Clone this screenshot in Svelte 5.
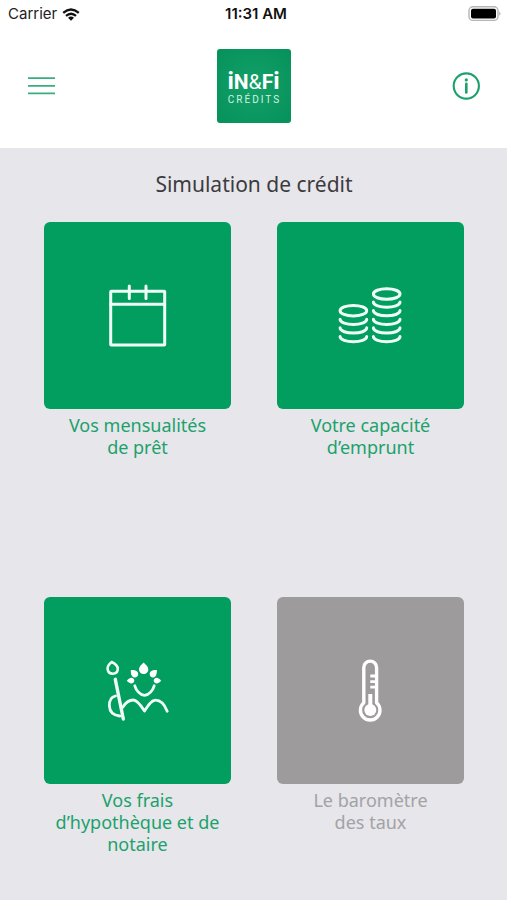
<script>
  const tiles = [
    { id: 'calendar', lines: ['Vos mensualités', 'de prêt'] },
    { id: 'coins', lines: ['Votre capacité', 'd’emprunt'] },
    { id: 'notary', lines: ['Vos frais', 'd’hypothèque et de', 'notaire'] },
    { id: 'thermometer', lines: ['Le baromètre', 'des taux'], disabled: true }
  ];
  const boxes = {
    calendar: '-46 -48 187 187',
    coins: '-48 -48 187 187',
    notary: '-51 -53 187 187',
    thermometer: '-63 -53 187 187'
  };
  const leftCoins = [50, 58.6, 67.2];
  const rightCoins = [32.8, 41.4, 50, 58.6, 67.2];
</script>

<div class="screen">
  <div class="status">
    <div class="carrier">
      <span>Carrier</span>
      <svg width="18" height="13" viewBox="0 0 18 13" aria-hidden="true">
        <g fill="none" stroke="#111" stroke-width="2.3">
          <path d="M1.2 4.9 Q9 -1.9 16.8 4.9" />
          <path d="M4 7.9 Q9 3.5 14 7.9" />
        </g>
        <path d="M6 9.8 Q9 7.4 12 9.8 L9 12.8 Z" fill="#111" />
      </svg>
    </div>
    <time>11:31 AM</time>
    <svg class="battery" width="36" height="16" viewBox="0 0 36 16" aria-hidden="true">
      <rect x="1" y="0.8" width="29" height="13.6" rx="4" fill="#fff" stroke="#b5b5b5" stroke-width="1.4" />
      <rect x="3" y="2.8" width="25" height="9.6" rx="2" fill="#000" />
      <path d="M31.4 5.4 Q33.4 7.6 31.4 9.8 Z" fill="#999" />
    </svg>
  </div>

  <header>
    <button class="icon" aria-label="Menu">
      <svg width="28" height="28" viewBox="0 0 28 28" stroke="#3aad80" stroke-width="1.8">
        <path d="M1 6.2H28M1 13.8H28M1 21.4H28" />
      </svg>
    </button>
    <div class="logo">
      <div class="brand"><span>i</span>N<span class="amp">&amp;</span>F<span>i</span></div>
      <div class="sub">CRÉDITS</div>
    </div>
    <button class="icon" aria-label="Informations">
      <svg width="28" height="28" viewBox="0 0 28 28" fill="none" stroke="#1ba26c">
        <circle cx="14.3" cy="14" r="12.6" stroke-width="2.1" />
        <path d="M14.3 11.8V20.4" stroke-width="2.6" stroke-linecap="round" />
        <circle cx="14.3" cy="7.9" r="1.6" fill="#1ba26c" stroke="none" />
      </svg>
    </button>
  </header>

  <main>
    <h1>Simulation de crédit</h1>
    <div class="grid">
      {#each tiles as tile (tile.id)}
        <button class="tile" disabled={tile.disabled}>
          <svg class="art" viewBox={boxes[tile.id]} fill="none" stroke="#effff7" stroke-width="3" stroke-linecap="round" stroke-linejoin="round" aria-hidden="true">
            {#if tile.id === 'calendar'}
              <rect x="20.7" y="21.3" width="54" height="53.7" rx="0.5" />
              <path d="M20.7 34.3H74.7M39.3 16V28.4M56 16V28.4" />
            {:else if tile.id === 'coins'}
              <ellipse cx="28.4" cy="40.7" rx="13.3" ry="5.3" />
              {#each leftCoins as y}
                <path d="M15.1 {y - 0.8} C15.1 {y + 6.2} 41.7 {y + 6.2} 41.7 {y - 0.8}" />
              {/each}
              <ellipse cx="61.7" cy="24" rx="13.3" ry="5.3" />
              {#each rightCoins as y}
                <path d="M48.4 {y - 0.8} C48.4 {y + 6.2} 75 {y + 6.2} 75 {y - 0.8}" />
              {/each}
            {:else if tile.id === 'notary'}
              <path d="M16.7 12 C13.6 14.4 12.3 16.8 12.6 19.3 C13 22 15 23.7 17.8 23.7 C20.6 23.7 22.6 21.8 22.8 19 C22.8 16 20.5 13.8 16.7 12 Z" stroke-width="2.6" />
              <path d="M20.3 29.3 L28.3 69" stroke-width="3.4" />
              <path d="M20.5 46 C16 47 14.2 51 14.4 56 C14.6 61.5 18.3 65.3 24.8 66" stroke-width="2.8" />
              <path d="M27.5 57.5 C31 51.8 35 50 38.2 50 C42.2 50 46 55.5 49.5 61 C53 55.5 56.3 50.4 60.3 50.2 C66 50 69.5 54.5 72.2 61.2" stroke-width="2.8" />
              <path d="M39.8 35.8 C41 40 45 45.2 49.5 45.4 C54 45.2 58 40 59.2 35.8" stroke-width="2.8" />
              <g fill="#fff" stroke="none">
                <path d="M48.6 12.6 C45.6 15.3 44 17.2 44 19.4 C44 22 46 23.9 48.6 23.9 C51.2 23.9 53.3 22 53.3 19.4 C53.3 17.2 51.6 15.3 48.6 12.6 Z" />
                <path d="M35.8 20 C39.8 19.7 43.2 21 43.2 24 C43.2 26.2 41.4 27.6 39.5 27.4 C36.7 27.2 35.8 24.3 35.8 20 Z" />
                <path d="M61.9 20 C57.8 19.7 54.7 21 54.7 24 C54.7 26.2 56.3 27.6 58.2 27.4 C61 27.2 61.9 24.3 61.9 20 Z" />
                <path d="M31.8 30.7 C34 28.2 35.4 27.6 36.6 27.8 C40.2 28.4 40.2 33 36.6 33.4 C35.2 33.5 33.8 32.8 31.8 30.7 Z" />
                <path d="M66.2 30.7 C64 28.2 62.6 27.6 61.4 27.8 C57.8 28.4 57.8 33 61.4 33.4 C62.8 33.5 64.2 32.8 66.2 30.7 Z" />
              </g>
            {:else}
              <path d="M23.8 52.8 V17.5 A6.4 6.4 0 0 1 36.6 17.5 V52.8 A9.8 9.8 0 1 1 23.8 52.8 Z" stroke="#fff" stroke-width="3.4" />
              <path d="M30.3 26H36M30.3 31.6H36M30.3 37.2H36" stroke="#fff" stroke-width="2.8" stroke-linecap="butt" />
              <path d="M30.3 44V58" stroke="#fff" stroke-width="4" stroke-linecap="butt" />
              <circle cx="30.3" cy="60" r="6" fill="#fff" stroke="none" />
            {/if}
          </svg>
          <span class="label">
            {#each tile.lines as line}<span>{line}</span>{/each}
          </span>
        </button>
      {/each}
    </div>
  </main>
</div>

<style>
  :global(body) {
    margin: 0;
    background: #e7e6eb;
  }
  .screen {
    min-height: 100vh;
    display: flex;
    flex-direction: column;
    background: #e7e6eb;
    font-family: "Noto Sans", "Open Sans", sans-serif;
  }
  button {
    padding: 0;
    border: 0;
    background: none;
    font: inherit;
    cursor: pointer;
  }
  svg {
    display: block;
  }
  .status {
    display: grid;
    grid-template-columns: 1fr auto 1fr;
    align-items: center;
    height: 28px;
    padding: 0 3px 0 8px;
    background: #fff;
    color: #222;
    font: 15px/28px Inter, sans-serif;
  }
  .carrier {
    display: flex;
    align-items: center;
    gap: 5px;
  }
  time {
    color: #111;
    font-weight: 600;
  }
  .battery {
    justify-self: end;
  }
  header {
    display: flex;
    align-items: center;
    justify-content: space-between;
    height: 120px;
    padding: 0 27px;
    box-sizing: border-box;
    background: #fff;
  }
  .icon,
  .logo {
    margin-bottom: 4px;
  }
  .logo {
    width: 74px;
    height: 74px;
    box-sizing: border-box;
    padding-top: 20px;
    border-radius: 3px;
    background: radial-gradient(circle, #12a069, #07915a);
    color: #fff;
    text-align: center;
    font-family: Roboto, sans-serif;
  }
  .brand {
    font-size: 21px;
    line-height: 24px;
    font-weight: 700;
  }
  .brand span {
    font-size: 24px;
  }
  .brand .amp {
    font-size: 21px;
    font-weight: 400;
  }
  .sub {
    padding-left: 2px;
    font-size: 10px;
    line-height: 12px;
    letter-spacing: 2px;
    color: #d3f3e4;
  }
  main {
    flex: 1;
    padding: 22px 43px 40px 44px;
  }
  h1 {
    margin: 0 0 24px;
    color: #3c3b40;
    font-size: 21px;
    line-height: 28px;
    font-weight: 400;
    text-align: center;
  }
  .grid {
    display: grid;
    grid-template-columns: 1fr 1fr;
    gap: 139px 46px;
  }
  .tile {
    display: flex;
    flex-direction: column;
    align-items: stretch;
    gap: 5px;
    color: #1ba26c;
  }
  .art {
    width: 100%;
    border-radius: 6px;
    background: #029e60;
  }
  .label {
    font-size: 18px;
    line-height: 22px;
    text-align: center;
  }
  .label span {
    display: block;
  }
  .tile:disabled {
    color: #a3a2a5;
    cursor: default;
  }
  .tile:disabled .art {
    background: #9d9b9c;
  }
</style>
